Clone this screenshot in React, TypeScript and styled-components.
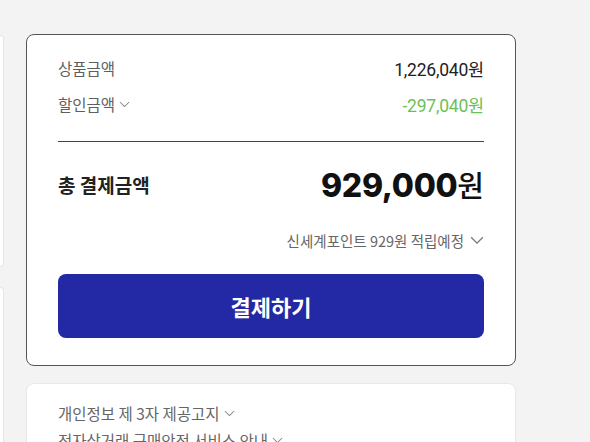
import React from "react";
import styled, { createGlobalStyle } from "styled-components";

const Global = createGlobalStyle`
  html, body { margin: 0; padding: 0; background: #f3f3f3; }
  body { font-family: Roboto, "Noto Sans CJK KR", sans-serif; -webkit-font-smoothing: antialiased; }
`;

const Page = styled.div`
  width: 590px;
  height: 442px;
  overflow: hidden;
  display: grid;
  grid-template-columns: 4px 1fr;
  column-gap: 22px;
  padding-top: 34px;
  box-sizing: border-box;
`;

const LeftCol = styled.div`
  display: flex;
  flex-direction: column;
  gap: 20px;
  margin-top: 1px;
`;

const LeftCard = styled.div<{ $h: number }>`
  height: ${(p) => p.$h}px;
  background: #fff;
  border: 1px solid #e6e6e6;
  border-left: none;
  border-radius: 0 8px 8px 0;
  box-sizing: border-box;
`;

const RightCol = styled.div`
  width: 490px;
  display: flex;
  flex-direction: column;
  gap: 17px;
`;

const SummaryCard = styled.section`
  background: #fff;
  border: 1px solid #555;
  border-radius: 8px;
  padding: 21px 31px 27px;
  display: flex;
  flex-direction: column;
`;

const Row = styled.div<{ $mt?: number }>`
  display: flex;
  justify-content: space-between;
  align-items: center;
  height: 24px;
  margin-top: ${(p) => p.$mt ?? 0}px;
`;

const Label = styled.span`
  display: inline-flex;
  align-items: center;
  gap: 4px;
  font-size: 15.5px;
  color: #5f5f5f;
  font-family: "Noto Sans CJK KR", sans-serif;
`;

const Amount = styled.span<{ $color?: string }>`
  font-size: 17.5px;
  color: ${(p) => p.$color ?? "#222"};
  font-family: Roboto, "Noto Sans CJK KR", sans-serif;
  letter-spacing: -0.2px;
`;

const Divider = styled.hr`
  border: none;
  border-top: 1px solid #444;
  margin: 25px 0 0;
`;

const TotalRow = styled.div`
  display: flex;
  justify-content: space-between;
  align-items: center;
  margin-top: 23px;
  height: 38px;
`;

const TotalLabel = styled.span`
  font-size: 19px;
  font-weight: 700;
  color: #222;
  font-family: "Noto Sans CJK KR", sans-serif;
`;

const TotalAmount = styled.span`
  display: inline-flex;
  align-items: baseline;
  color: #111;
`;

const TotalNum = styled.span`
  font-size: 32px;
  font-weight: 800;
  font-family: Inter, Roboto, sans-serif;
  letter-spacing: -0.3px;
`;

const TotalWon = styled.span`
  font-size: 29px;
  font-weight: 500;
  font-family: "Noto Sans CJK KR", sans-serif;
`;

const PointRow = styled.div`
  display: flex;
  justify-content: flex-end;
  align-items: center;
  gap: 6px;
  margin-top: 27px;
  height: 20px;
  font-size: 14.5px;
  color: #666;
  font-family: "Noto Sans CJK KR", sans-serif;
`;

const PayButton = styled.button`
  margin-top: 24px;
  height: 64px;
  border: none;
  border-radius: 8px;
  background: #2329a5;
  color: #fff;
  font-size: 22px;
  font-weight: 700;
  font-family: "Noto Sans CJK KR", sans-serif;
  cursor: pointer;
`;

const InfoCard = styled.section`
  background: #fff;
  border: 1px solid #e8e8e8;
  border-radius: 8px;
  padding: 18px 31px 0;
  height: 200px;
  display: flex;
  flex-direction: column;
  gap: 5px;
`;

const InfoLine = styled.div`
  display: flex;
  align-items: center;
  gap: 4px;
  height: 22px;
  font-size: 15.5px;
  color: #666;
  font-family: "Noto Sans CJK KR", sans-serif;
`;

const Chevron = ({ size = 11, color = "#888" }: { size?: number; color?: string }) => (
  <svg width={size} height={size * 0.6} viewBox="0 0 12 7" fill="none">
    <path d="M1 1l5 5 5-5" stroke={color} strokeWidth="1.1" />
  </svg>
);

export default function App() {
  return (
    <>
      <Global />
      <Page>
        <LeftCol>
          <LeftCard $h={232} />
          <LeftCard $h={200} />
        </LeftCol>
        <RightCol>
          <SummaryCard>
            <Row>
              <Label>상품금액</Label>
              <Amount>1,226,040원</Amount>
            </Row>
            <Row $mt={12}>
              <Label>
                할인금액 <Chevron />
              </Label>
              <Amount $color="#6dbf57">-297,040원</Amount>
            </Row>
            <Divider />
            <TotalRow>
              <TotalLabel>총 결제금액</TotalLabel>
              <TotalAmount>
                <TotalNum>929,000</TotalNum>
                <TotalWon>원</TotalWon>
              </TotalAmount>
            </TotalRow>
            <PointRow>
              신세계포인트 929원 적립예정 <Chevron size={14} color="#777" />
            </PointRow>
            <PayButton>결제하기</PayButton>
          </SummaryCard>
          <InfoCard>
            <InfoLine>
              개인정보 제 3자 제공고지 <Chevron />
            </InfoLine>
            <InfoLine>
              전자상거래 구매안전 서비스 안내 <Chevron />
            </InfoLine>
          </InfoCard>
        </RightCol>
      </Page>
    </>
  );
}
